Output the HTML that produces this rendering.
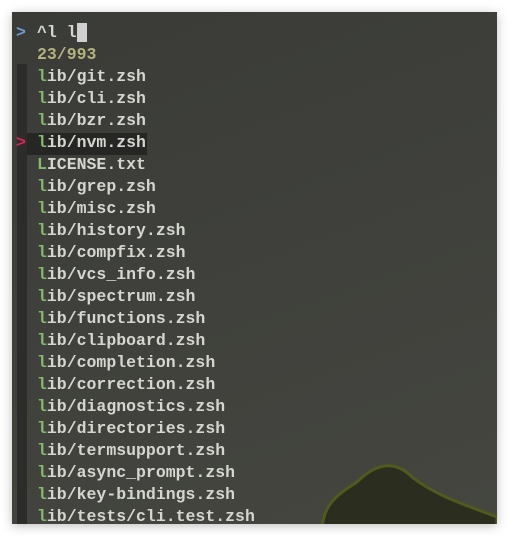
<!DOCTYPE html><html><head><style>
body{margin:0;width:509px;height:537px;background:#fff;overflow:hidden;position:relative}
#w{position:absolute;left:12px;top:12px;width:485px;height:512px;background:linear-gradient(160deg,#3a3b37,#454640);box-shadow:0 2px 10px rgba(0,0,0,.25);overflow:hidden}
#g{position:absolute;left:5px;top:52px;width:10px;height:470px;background:#2c2d2a}
.l{position:absolute;left:25px;height:22px;line-height:22px;font:bold 16.5px "Liberation Mono",monospace;color:#d6d6d0;white-space:pre;margin-top:2px}
.l b{color:#86b86e}
#sel{position:absolute;left:15px;top:121px;width:120px;height:22px;background:#262724}
</style></head><body><div id="w">
<svg style="position:absolute;left:300px;top:440px" width="185" height="80"><path d="M10 80 C10 50 30 40 45 30 C60 15 80 5 100 25 C125 45 160 55 185 65 L185 80Z" fill="#2b2d1f" stroke="#4f5a1c" stroke-width="3"/></svg>
<div id="g"></div><div id="sel"></div>
<div class="l" style="left:4px;top:9px;color:#6f9ad0">&gt;</div>
<div class="l" style="top:9px">^l l<span style="background:#d0d0d0;color:#d0d0d0"> </span></div>
<div class="l" style="top:31px;color:#b3b37e">23/993</div>
<div class="l" style="top:53px"><b>l</b>ib/git.zsh</div>
<div class="l" style="top:75px"><b>l</b>ib/cli.zsh</div>
<div class="l" style="top:97px"><b>l</b>ib/bzr.zsh</div>
<div class="l" style="left:4px;top:119px;color:#e0205a">&gt;</div>
<div class="l" style="top:119px"><b>l</b>ib/nvm.zsh</div>
<div class="l" style="top:141px"><b>L</b>ICENSE.txt</div>
<div class="l" style="top:163px"><b>l</b>ib/grep.zsh</div>
<div class="l" style="top:185px"><b>l</b>ib/misc.zsh</div>
<div class="l" style="top:207px"><b>l</b>ib/history.zsh</div>
<div class="l" style="top:229px"><b>l</b>ib/compfix.zsh</div>
<div class="l" style="top:251px"><b>l</b>ib/vcs_info.zsh</div>
<div class="l" style="top:273px"><b>l</b>ib/spectrum.zsh</div>
<div class="l" style="top:295px"><b>l</b>ib/functions.zsh</div>
<div class="l" style="top:317px"><b>l</b>ib/clipboard.zsh</div>
<div class="l" style="top:339px"><b>l</b>ib/completion.zsh</div>
<div class="l" style="top:361px"><b>l</b>ib/correction.zsh</div>
<div class="l" style="top:383px"><b>l</b>ib/diagnostics.zsh</div>
<div class="l" style="top:405px"><b>l</b>ib/directories.zsh</div>
<div class="l" style="top:427px"><b>l</b>ib/termsupport.zsh</div>
<div class="l" style="top:449px"><b>l</b>ib/async_prompt.zsh</div>
<div class="l" style="top:471px"><b>l</b>ib/key-bindings.zsh</div>
<div class="l" style="top:493px"><b>l</b>ib/tests/cli.test.zsh</div>
</div></body></html>
